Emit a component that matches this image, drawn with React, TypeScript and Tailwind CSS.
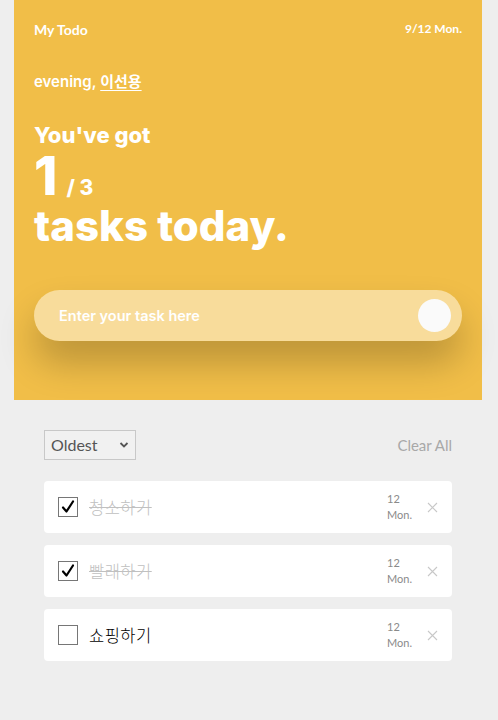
import React from "react";

const font = { fontFamily: "Lato, 'Noto Sans CJK KR', sans-serif" };
const inter = { fontFamily: "Inter, 'Noto Sans CJK KR', sans-serif" };

type Item = { text: string; done: boolean };
const items: Item[] = [
  { text: "청소하기", done: true },
  { text: "빨래하기", done: true },
  { text: "쇼핑하기", done: false },
];

function Check({ done }: { done: boolean }) {
  return (
    <div className="w-[20px] h-[20px] border border-[#767676] bg-white flex items-center justify-center shrink-0">
      {done && (
        <svg width="16" height="16" viewBox="0 0 16 16">
          <path d="M3 8.5 L6.5 12.5 L13 2.5" fill="none" stroke="#000" strokeWidth="2.2" strokeLinecap="round" strokeLinejoin="round" />
        </svg>
      )}
    </div>
  );
}

export default function App() {
  return (
    <div className="min-h-[720px] bg-[#eeeeee] pl-[14px] pr-[16px]" style={font}>
      <div className="bg-[#f1be48] h-[400px] px-[20px] pt-[19px] text-white flex flex-col">
        <div className="flex justify-between items-center h-[20px]">
          <span className="text-[14px] font-bold">My Todo</span>
          <span className="text-[12px] font-bold">9/12 Mon.</span>
        </div>
        <div className="mt-[33px] text-[15px] font-semibold h-[20px] flex items-center" style={inter}>
          evening,&nbsp;<span className="underline underline-offset-[3px]">이선용</span>
        </div>
        <div className="mt-[29px] text-[22px] font-extrabold leading-[28px]" style={inter}>You've got</div>
        <div className="flex items-baseline mt-[7px] h-[40px]" style={inter}>
          <span className="text-[53px] font-extrabold leading-[40px]">1</span>
          <span className="text-[21px] font-extrabold ml-[9px] leading-[24px]">/ 3</span>
        </div>
        <div className="text-[42px] font-extrabold leading-[42px] mt-[9px]" style={inter}>tasks today.</div>
        <div className="mt-[43px] h-[51px] rounded-full bg-[#f8dc9b] shadow-[0_22px_36px_rgba(0,0,0,0.22)] flex items-center justify-between pl-[25px] pr-[11px]">
          <span className="text-[14.5px] font-semibold text-white" style={inter}>Enter your task here</span>
          <div className="w-[33px] h-[33px] rounded-full bg-[#fafafa]" />
        </div>
      </div>
      <div className="px-[30px] pt-[30px]">
        <div className="flex justify-between items-center">
          <div className="w-[92px] h-[30px] border border-[#c8c8c8] bg-[#f1f1f1] flex items-center justify-between px-[6px]">
            <span className="text-[16px] text-[#555]">Oldest</span>
            <svg width="10" height="8" viewBox="0 0 10 8">
              <path d="M1.5 2 L5 5.5 L8.5 2" fill="none" stroke="#555" strokeWidth="1.8" />
            </svg>
          </div>
          <span className="text-[15px] text-[#a8a8a8]">Clear All</span>
        </div>
        <div className="mt-[21px] flex flex-col gap-[12px]">
          {items.map((it, i) => (
            <div key={i} className="bg-white rounded-[4px] h-[52px] flex items-center pl-[14px] pr-[14px]">
              <Check done={it.done} />
              <span
                className={
                  "ml-[11px] text-[16.5px] flex-1 font-light tracking-[0.5px] " +
                  (it.done ? "line-through text-[#c0c0c0]" : "text-black")
                }
                style={{ fontFamily: "'Noto Sans CJK KR', sans-serif" }}
              >
                {it.text}
              </span>
              <div className="text-[11px] leading-[16px] text-[#8a8a8a] w-[30px] ml-[1px]">
                <div>12</div>
                <div>Mon.</div>
              </div>
              <span className="ml-[10px] text-[#c8c8c8]">
                <svg width="11" height="11" viewBox="0 0 11 11">
                  <path d="M1 1 L10 10 M10 1 L1 10" stroke="#c8c8c8" strokeWidth="1.1" />
                </svg>
              </span>
            </div>
          ))}
        </div>
      </div>
    </div>
  );
}
